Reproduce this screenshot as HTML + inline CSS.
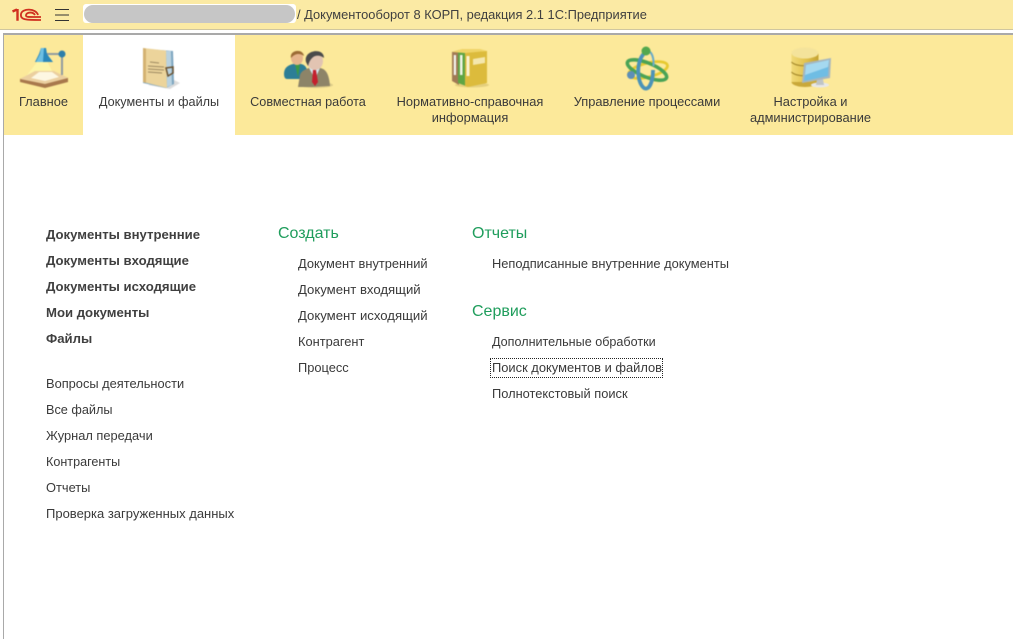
<!DOCTYPE html>
<html lang="ru"><head><meta charset="utf-8"><title>Документооборот</title>
<style>
html,body{margin:0;padding:0;background:#fff}
body{width:1013px;height:639px;position:relative;overflow:hidden;font-family:"Liberation Sans",Arial,sans-serif;font-size:12.85px;color:#3a3a3a}
.a{position:absolute;white-space:nowrap;line-height:16px}
.c{text-align:center}
.b{font-weight:bold;color:#404040;font-size:13.15px}
.g{color:#1f9d5c;font-size:16px;line-height:20px}
svg{position:absolute;overflow:visible}
svg.i{filter:blur(.45px)}
</style></head><body>
<div class="a" style="left:0;top:0;width:1013px;height:29px;background:#fbeaa4"></div>
<div class="a" style="left:0;top:29px;width:1013px;height:1px;background:#cfc6a0"></div>
<div class="a" style="left:3px;top:33px;width:1010px;height:2px;background:#a9a9a9"></div>
<div class="a" style="left:3px;top:33px;width:1px;height:606px;background:#a9a9a9"></div>
<div class="a" style="left:4px;top:35px;width:1009px;height:100px;background:#fce99a"></div>
<div class="a" style="left:83px;top:35px;width:152px;height:100px;background:#fff"></div>

<svg style="left:12px;top:7px" width="30" height="15" viewBox="0 0 30 15" fill="none" stroke="#d0301f" stroke-width="1.800">
<path d="M0.500 4.500 L5 2.500 M5.500 2 V13.800" stroke-width="2.400"/><path d="M26 8 C24 1 10 1 9 7 C8 13 14 13 29 13"/><path d="M23 8 C21 4.500 15 5 14 8 C13.500 10.500 17 10 29 10"/>
</svg>
<svg style="left:55px;top:8px" width="15" height="13" fill="none" stroke="#333" stroke-width="1"><path d="M0 1.500H14M0 7H14M0 12.500H14"/></svg>
<div class="a" style="left:83px;top:4px;width:213px;height:19px;background:#fff;border-radius:3px"></div>
<div class="a" style="left:84px;top:5px;width:211px;height:18px;background:#c6c6c6;border-radius:9px"></div>
<div class="a" style="left:297px;top:7px;color:#404040;font-size:12.88px">/ Документооборот 8 КОРП, редакция 2.1 1С:Предприятие</div>

<!-- Главное -->
<svg class="i" style="left:18px;top:46px" width="52" height="44" viewBox="0 0 52 44">
<path d="M20 15 L9 29 H36 L29 15Z" fill="#fdf5a8"/>
<path d="M2 33 L17 26 H36 L50 32 L50 36 L27 42 L2 36Z" fill="#a8784c"/>
<path d="M2 33 L17 25 H36 L50 32 L27 38Z" fill="#ebcf9f"/>
<path d="M13 32 L21 26 H34 L41 31 L27 35Z" fill="#fdf7e2"/>
<path d="M28 8 H43 M44 9 V29" stroke="#8f9aa0" stroke-width="2" fill="none"/>
<circle cx="44" cy="8" r="3.500" fill="#2c7eaa"/>
<path d="M23 2 H28 L29 8 L35 16 H17 L21 8Z" fill="#2a88bb"/>
<path d="M23 2 H26 L25 16 H18 L22 8Z" fill="#6dbfe3"/>
</svg>
<div class="a c" style="left:4px;top:94px;width:79px">Главное</div>

<!-- Документы -->
<svg class="i" style="left:140px;top:47px" width="42" height="44" viewBox="0 0 42 44">
<path d="M8 38 L30 42 L40 36 L30 31Z" fill="#dcdcdc"/>
<path d="M6 2 L33 4 L34 37 L26 41 L3 36Z" fill="#7ba4bf"/>
<path d="M26 4 L31 4 L32 38 L27 40Z" fill="#b9d2e0"/>
<path d="M3 1 L26 3.500 L27 41 L3 35Z" fill="#ecd49b"/>
<path d="M3 1 L6 1.500 L6 36 L3 35Z" fill="#d4b272"/>
<path d="M10 15 L19 16 M8 19 L24 20 M8 22 L24 23 M8 25 L22 26" stroke="#9c8860" stroke-width="1" fill="none"/>
<path d="M26 21 L33 20 L33 26 L28 29Z" fill="none" stroke="#6b5230" stroke-width="1.500"/>
</svg>
<div class="a c" style="left:83px;top:94px;width:152px;font-size:12.65px">Документы и файлы</div>

<!-- Совместная работа -->
<svg class="i" style="left:282px;top:49px" width="52" height="40" viewBox="0 0 52 40">
<ellipse cx="34" cy="36" rx="17" ry="3" fill="#dccb88"/>
<path d="M2 25 C2 18 7 16 11 15 L19 15 C24 16 26 20 26 29 L20 30 H5 C3 30 2 28 2 25Z" fill="#2d7e96"/>
<path d="M13 15 L18 15 L16 28Z" fill="#3c9a43"/>
<ellipse cx="15" cy="9" rx="6" ry="7" fill="#e6b48c"/>
<path d="M9 9 C7 1 21 -1 22 7 C18 4 13 4 9 9Z" fill="#9c6b35"/>
<path d="M16 38 L18 26 C19 22 24 20 27 19 L38 19 C44 20 47 25 48 37 L30 38Z" fill="#8d8468"/>
<path d="M27 19 L38 19 L33 30Z" fill="#d4e6ef"/>
<path d="M31 21 L34 21 L36 33 L33 37 L30 33Z" fill="#c4202d"/>
<ellipse cx="33" cy="12" rx="8" ry="9" fill="#e2c4b2"/>
<path d="M24 13 C21 1 42 -2 42 9 C37 5 29 5 26 17Z" fill="#4b4b4b"/>
</svg>
<div class="a c" style="left:235px;top:94px;width:146px;font-size:12.65px">Совместная работа</div>

<!-- НСИ -->
<svg class="i" style="left:450px;top:47px" width="40" height="42" viewBox="0 0 40 42">
<ellipse cx="22" cy="38" rx="17" ry="2.500" fill="#e4cf7e"/>
<path d="M2 5 L9 3 V38 L2 34Z" fill="#a07a55"/>
<path d="M3.800 8 L6 8 V28 L3.800 28Z" fill="#f5f5f0"/>
<path d="M8 3 L16 3 V39 L8 36Z" fill="#5fa544"/>
<path d="M10 8 L12.500 8 V28 L10 28Z" fill="#f0f6e8"/>
<path d="M15 5 L37 4 L37 36 L18 40 L15 39Z" fill="#dcbb3c"/>
<path d="M2 5 L12 2 L30 2 L37 4 L15 6Z" fill="#efd468"/>
<path d="M23 12 L35 10 V16 L23 18Z" fill="#f4e7ae"/>
<path d="M16.500 9 L19.500 9 V29 L16.500 29Z" fill="#fbf3cf"/>
</svg>
<div class="a c" style="left:381px;top:94px;width:178px;white-space:normal">Нормативно-справочная<br>информация</div>

<!-- Управление процессами -->
<svg class="i" style="left:624px;top:44px" width="46" height="48" viewBox="0 0 46 48" fill="none">
<ellipse cx="24" cy="26" rx="20" ry="7" transform="rotate(-14 24 26)" stroke="#e6c930" stroke-width="2.800"/>
<ellipse cx="23" cy="26" rx="21" ry="7" transform="rotate(22 23 26)" stroke="#4aa356" stroke-width="3.600"/>
<path d="M22 8 C12 14 12 38 20 44 C25 47 29 38 29 26" stroke="#4c93b8" stroke-width="3.800"/>
<path d="M24 7 C28 8 30 14 29.500 22" stroke="#6aaac8" stroke-width="2"/>
<circle cx="22" cy="7" r="4.500" fill="#53a84d"/>
<circle cx="7" cy="31" r="4" fill="#5d8fb8"/>
</svg>
<div class="a c" style="left:559px;top:94px;width:176px">Управление процессами</div>

<!-- Настройка -->
<svg class="i" style="left:790px;top:46px" width="44" height="44" viewBox="0 0 44 44">
<defs><linearGradient id="d" x1="0" x2="1" y1="0" y2="0"><stop offset="0" stop-color="#f0d977"/><stop offset=".5" stop-color="#e3c450"/><stop offset="1" stop-color="#c4a232"/></linearGradient></defs>
<ellipse cx="15" cy="36" rx="13.500" ry="5" fill="#c9a83a"/>
<rect x="1.500" y="7" width="27" height="29" fill="url(#d)"/>
<path d="M1.500 16 C6 21 24 21 28.500 16 M1.500 26 C6 31 24 31 28.500 26" stroke="#a58a2c" stroke-width="1.200" fill="none"/>
<ellipse cx="15" cy="7" rx="13.500" ry="5.500" fill="#f4e39b"/>
<ellipse cx="30" cy="39" rx="9" ry="2.500" fill="#e8e8e8"/>
<path d="M27 33 H33 L34 39 H26Z" fill="#bfc4c6"/>
<path d="M14 17 L41 12 L40 32 L12 37Z" fill="#a7b6bd"/>
<path d="M16 19 L39 14 L38 30 L14 35Z" fill="#6fbde4"/>
<path d="M16 19 L39 14 L38 21 L15 29Z" fill="#a5d9f0"/>
</svg>
<div class="a c" style="left:735px;top:94px;width:151px;white-space:normal">Настройка и<br>администрирование</div>

<!-- Column 1 -->
<div class="a b" style="left:46px;top:227px">Документы внутренние</div>
<div class="a b" style="left:46px;top:253px">Документы входящие</div>
<div class="a b" style="left:46px;top:279px">Документы исходящие</div>
<div class="a b" style="left:46px;top:305px">Мои документы</div>
<div class="a b" style="left:46px;top:331px">Файлы</div>
<div class="a" style="left:46px;top:376px">Вопросы деятельности</div>
<div class="a" style="left:46px;top:402px;font-size:12.7px">Все файлы</div>
<div class="a" style="left:46px;top:428px">Журнал передачи</div>
<div class="a" style="left:46px;top:454px;font-size:12.6px">Контрагенты</div>
<div class="a" style="left:46px;top:480px">Отчеты</div>
<div class="a" style="left:46px;top:506px;font-size:13px">Проверка загруженных данных</div>

<!-- Column 2 -->
<div class="a g" style="left:278px;top:224px">Создать</div>
<div class="a" style="left:298px;top:256px">Документ внутренний</div>
<div class="a" style="left:298px;top:282px;font-size:13.15px">Документ входящий</div>
<div class="a" style="left:298px;top:308px;font-size:13.15px">Документ исходящий</div>
<div class="a" style="left:298px;top:334px">Контрагент</div>
<div class="a" style="left:298px;top:360px">Процесс</div>

<!-- Column 3 -->
<div class="a g" style="left:472px;top:224px">Отчеты</div>
<div class="a" style="left:492px;top:256px">Неподписанные внутренние документы</div>
<div class="a g" style="left:472px;top:302px">Сервис</div>
<div class="a" style="left:492px;top:334px;font-size:12.6px">Дополнительные обработки</div>
<div class="a" style="left:490px;top:358px;width:171px;height:18px;border:1px dotted #222"></div>
<div class="a" style="left:492px;top:360px;font-size:12.9px">Поиск документов и файлов</div>
<div class="a" style="left:492px;top:386px">Полнотекстовый поиск</div>
</body></html>
